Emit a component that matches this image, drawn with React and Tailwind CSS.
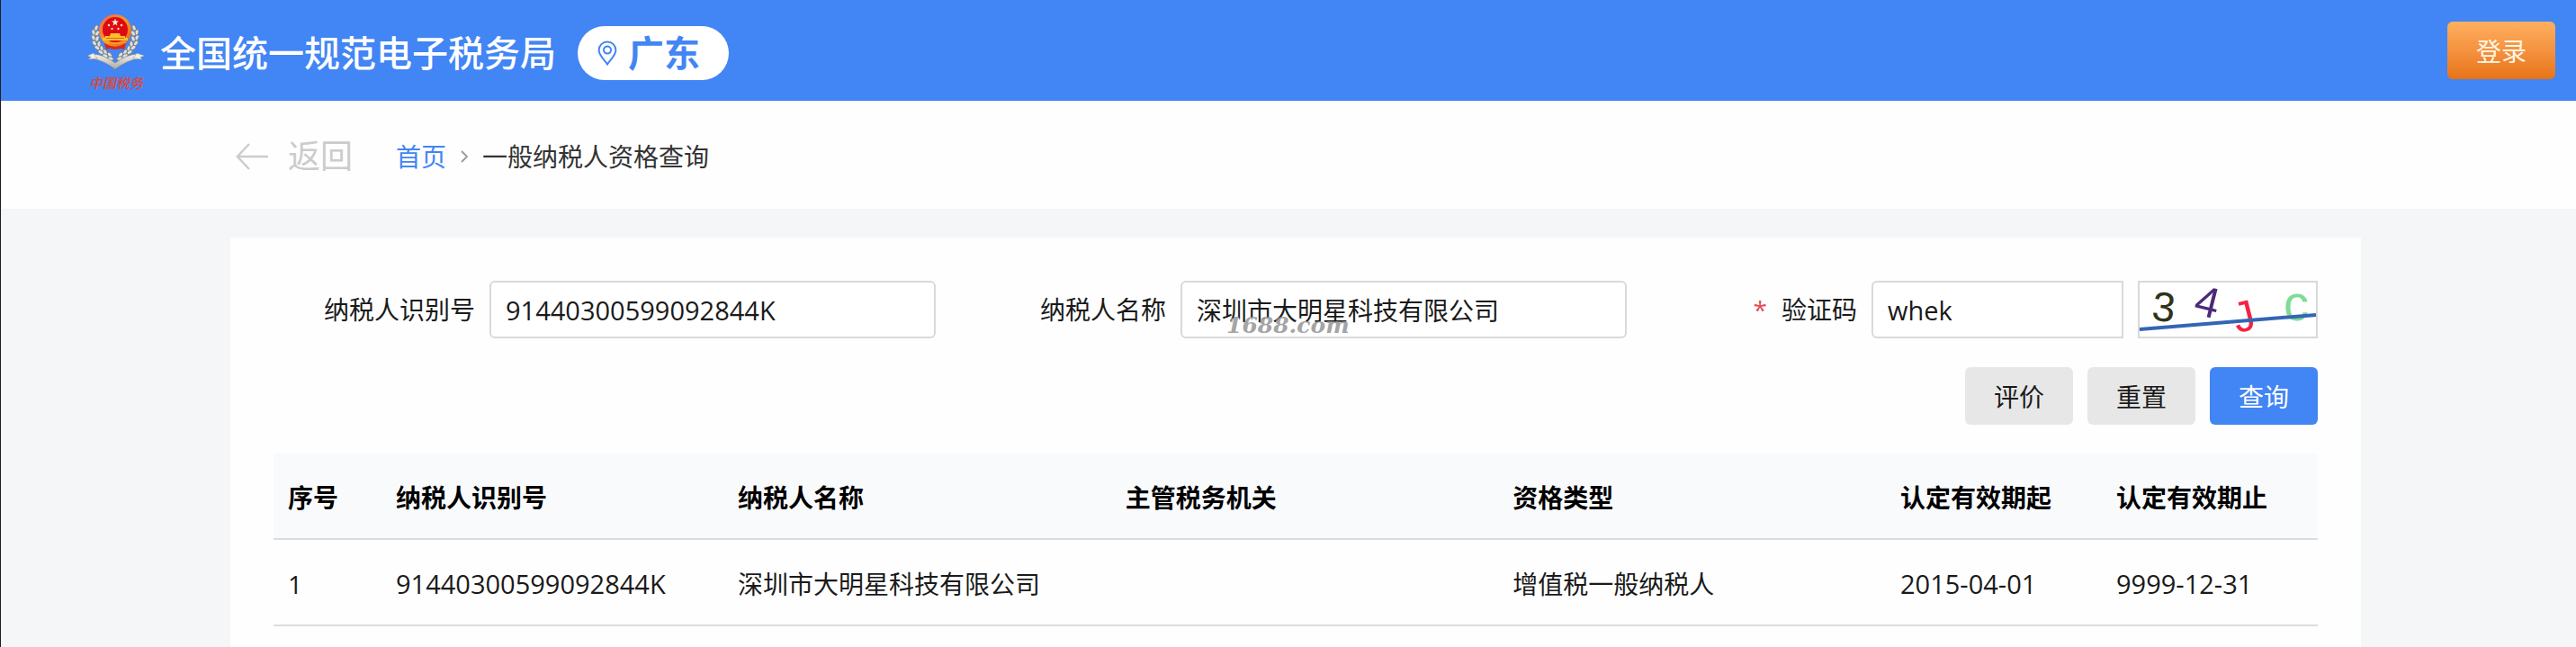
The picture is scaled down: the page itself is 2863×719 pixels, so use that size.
import React, { useState } from 'react'

const columns = [
    { key: "index", title: "序号", width: "w-[120px]" },
    { key: "taxId", title: "纳税人识别号", width: "w-[380px]", latin: true },
    { key: "name", title: "纳税人名称", width: "" },
    { key: "office", title: "主管税务机关", width: "" },
    { key: "type", title: "资格类型", width: "" },
    { key: "from", title: "认定有效期起", width: "w-[240px]", latin: true },
    { key: "to", title: "认定有效期止", width: "w-[240px]", latin: true },
]

const rows = [
    {
        index: "1",
        taxId: "91440300599092844K",
        name: "深圳市大明星科技有限公司",
        office: "",
        type: "增值税一般纳税人",
        from: "2015-04-01",
        to: "9999-12-31"
    },
]

// one side of the wheat wreath: [x, y, angle]
const leaves = [
    [11, 17, 20], [8, 22, -15], [12, 23, 35], [8, 28, -25], [12, 29, 20],
    [9, 34, -40], [14, 35, 5], [12, 39, -50], [17, 40, -10], [16, 44, -60],
    [21, 44, -25], [21, 48, -65], [26, 47, -40], [27, 51, -70],
]

const Wreath = () => (
    <g>
        {leaves.map(([x, y, angle]) => (
            <ellipse key={`${x}-${y}`} cx={x} cy={y} rx="2" ry="3.4" transform={`rotate(${angle} ${x} ${y})`} fill="#dfe0dc" stroke="#6f7780" strokeWidth="0.8" />
        ))}
    </g>
)

const Emblem = () => (
    <svg viewBox="0 2 66 66" className='w-[66px] h-[66px]' aria-hidden="true">
        <defs>
            <linearGradient id="rim" x1="0" y1="0" x2="1" y2="1">
                <stop offset="0" stopColor="#f0605a" />
                <stop offset="0.5" stopColor="#f59a23" />
                <stop offset="1" stopColor="#e8591a" />
            </linearGradient>
            <linearGradient id="ribbon" x1="0" y1="0" x2="0" y2="1">
                <stop offset="0" stopColor="#f4f3ef" />
                <stop offset="1" stopColor="#a9a7a2" />
            </linearGradient>
        </defs>
        <Wreath />
        <g transform="translate(64 0) scale(-1 1)"><Wreath /></g>
        <path d="M20 34 L44 34 L42 41 Q32 37 22 41 Z" fill="#d8281c" />
        <circle cx="32" cy="20" r="18" fill="url(#rim)" />
        <circle cx="32" cy="19" r="14" fill="#dd0a14" />
        <path d="M32 6.6 L33 9.6 L36 9.6 L33.6 11.5 L34.5 14.5 L32 12.7 L29.5 14.5 L30.4 11.5 L28 9.6 L31 9.6 Z" fill="#fff4cf" />
        <circle cx="25" cy="14" r="1.3" fill="#ffd9a0" />
        <circle cx="39" cy="14" r="1.3" fill="#ffd9a0" />
        <circle cx="28.5" cy="18" r="1.2" fill="#ffd9a0" />
        <circle cx="35.5" cy="18" r="1.2" fill="#ffd9a0" />
        <path d="M27 23 H37 L38 26 H43 V28 H46 V31 H18 V28 H21 V26 H26 Z" fill="#fbc02d" />
        <path d="M22 28.5 H42" stroke="#e06a10" strokeWidth="1" />
        <path d="M20 32.5 Q32 36 44 32.5" stroke="#f5a623" strokeWidth="1.6" fill="none" />
        <path d="M22 35 Q32 41 42 35 L40 39 Q32 43 24 39 Z" fill="#d8281c" />
        <path d="M8 46 Q20 47 32 56 Q44 47 56 46 L58 51 Q45 53 32 63 Q19 53 6 51 Z" fill="url(#ribbon)" stroke="#85837f" strokeWidth="0.6" />
        <path d="M8 45 L1 48 L5 49.5 L2 52 L12 51 Z" fill="#efeeea" stroke="#8d8b87" strokeWidth="0.5" />
        <path d="M56 45 L65 48 L60 49.5 L62 52 L52 51 Z" fill="#efeeea" stroke="#8d8b87" strokeWidth="0.5" />
    </svg>
)

const Header = () => (
    <header className='flex items-center justify-between h-28 pl-[95px] pr-[23px] bg-[#4285f4]'>
        <div className='flex items-center pt-1.5'>
            <div className='flex flex-col items-center w-[66px]'>
                <Emblem />
                <span className='text-[15px] leading-5 font-medium italic whitespace-nowrap text-[#e2452f]'>中国税务</span>
            </div>
            <h1 className='ml-4 text-[40px] leading-[60px] font-medium whitespace-nowrap text-white'>全国统一规范电子税务局</h1>
            <button type="button" className='flex items-center gap-3 h-[60px] ml-6 pl-[22px] pr-8 rounded-full bg-white text-[#4285f4]'>
                <svg viewBox="0 0 22 28" className='w-[22px] h-7' fill="none" stroke="currentColor" strokeWidth="2" aria-hidden="true">
                    <path d="M11 26.4 C8 21.8 1.6 16.5 1.6 10.8 A9.4 9.4 0 0 1 20.4 10.8 C20.4 16.5 14 21.8 11 26.4 Z" />
                    <circle cx="11" cy="10.6" r="4" />
                </svg>
                <span className='text-[40px] leading-[60px] font-bold'>广东</span>
            </button>
        </div>
        <button type="button" className='w-[120px] h-16 pt-0.5 rounded-md bg-linear-to-b from-[#ffb05f] to-[#e87312] text-[28px] text-[#fff6e6]'>登录</button>
    </header>
)

const Breadcrumb = () => (
    <nav className='flex items-center h-[120px] pt-1 pl-[261px] bg-[#fefefe] text-[28px] leading-10'>
        <button type="button" className='flex items-center gap-[22px] text-4xl text-[#cccccc]'>
            <svg viewBox="0 0 36 32" className='w-9 h-8' fill="none" stroke="currentColor" strokeWidth="2.4" aria-hidden="true">
                <path d="M15 2 L1.8 16 L15 30 M2 16 H36" />
            </svg>
            返回
        </button>
        <a href="#" className='ml-12 text-[#4285f4]'>首页</a>
        <svg viewBox="0 0 8 14" className='w-2 h-[14px] mx-4' fill="none" stroke="#999999" strokeWidth="1.8" aria-hidden="true">
            <path d="M1 1 L7 7 L1 13" />
        </svg>
        <span className='text-[#333333]'>一般纳税人资格查询</span>
    </nav>
)

const Captcha = () => (
    <svg viewBox="0 0 196 60" className='w-[200px] h-16 shrink-0 overflow-visible border-2 border-[#d9d9d9] bg-white' role="img" aria-label="验证码图片">
        <g fontFamily="'Liberation Sans', sans-serif" strokeWidth="1">
            <text x="14" y="43" fontSize="46" fill="#2e3317" transform="rotate(6 28 28)">3</text>
            <text x="62" y="38" fontSize="48" fill="#4b2a78" transform="rotate(14 76 22)">4</text>
            <text x="104" y="54" fontSize="48" fill="#f5223f" transform="rotate(-14 116 38)">J</text>
            <text x="160" y="42" fontSize="56" fill="#7fdc97">c</text>
        </g>
        <path d="M0 52 L196 36" stroke="#3465b5" strokeWidth="4" />
    </svg>
)

const inputStyle = 'flex-1 min-w-0 h-16 px-4 border-2 border-[#d9d9d9] bg-white text-[#1a1a1a] outline-none'
const labelStyle = 'w-[240px] shrink-0 pr-4 text-right whitespace-nowrap'

const QueryForm = () => {
    const [taxId, setTaxId] = useState("91440300599092844K")
    const [name, setName] = useState("深圳市大明星科技有限公司")
    const [code, setCode] = useState("whek")

    return (
        <form onSubmit={(e) => e.preventDefault()} className='text-[28px] text-[#1a1a1a]'>
            <div className='grid grid-cols-3 gap-8'>
                <div className='flex items-center'>
                    <label htmlFor="taxId" className={labelStyle}>纳税人识别号</label>
                    <input id="taxId" value={taxId} onChange={(e) => setTaxId(e.target.value)} className={`${inputStyle} rounded-md text-[29px]`} />
                </div>
                <div className='relative flex items-center'>
                    <label htmlFor="name" className={labelStyle}>纳税人名称</label>
                    <input id="name" value={name} onChange={(e) => setName(e.target.value)} className={`${inputStyle} rounded-md`} />
                    <span className="absolute left-[291px] top-9 pointer-events-none font-['DejaVu_Serif',serif] text-[25px] leading-7 font-bold italic text-[#8c8c8ccc] [text-shadow:1px_1px_1px_#ffffff]">1688.com</span>
                </div>
                <div className='flex items-center'>
                    <label htmlFor="code" className={labelStyle}>
                        <span className='mr-4 text-[#e34d59]'>*</span>验证码
                    </label>
                    <input id="code" value={code} onChange={(e) => setCode(e.target.value)} className={`${inputStyle} rounded-l-md mr-4 text-[29px]`} />
                    <Captcha />
                </div>
            </div>
            <div className='flex justify-end gap-4 mt-8'>
                <button type="button" className='w-[120px] h-16 pt-0.5 rounded-md bg-[#e7e7e7]'>评价</button>
                <button type="reset" className='w-[120px] h-16 pt-0.5 rounded-md bg-[#e7e7e7]'>重置</button>
                <button type="submit" className='w-[120px] h-16 pt-0.5 rounded-md bg-[#4285f4] text-white'>查询</button>
            </div>
        </form>
    )
}

const ResultTable = () => (
    <table className='w-full mt-8 table-fixed border-separate border-spacing-0 text-left text-[28px] leading-10 text-[#1a1a1a]'>
        <thead>
            <tr className='bg-[#f9fafc] text-black'>
                {columns.map((col) => (
                    <th key={col.key} scope="col" className={`${col.width} h-24 px-4 pt-1 border-b-2 border-[#dcdcdc] font-bold whitespace-nowrap`}>{col.title}</th>
                ))}
            </tr>
        </thead>
        <tbody>
            {rows.map((row) => (
                <tr key={row.index}>
                    {columns.map((col) => (
                        <td key={col.key} className={`h-24 px-4 pt-1 border-b-2 border-[#dcdcdc] whitespace-nowrap ${col.latin ? "text-[29px]" : ""}`}>{row[col.key]}</td>
                    ))}
                </tr>
            ))}
        </tbody>
    </table>
)

const App = () => {
  return (
    <div className="flex flex-col min-h-screen border-l border-[#1c1c1c] bg-[#f5f6f8] font-['Open_Sans','Noto_Sans_CJK_SC',sans-serif]">
        <Header />
        <Breadcrumb />
        <main className='flex flex-col flex-1 pt-8 pl-[255px] pr-[239px]'>
            <section className='flex-1 px-12 pt-12 bg-[#fefefe]'>
                <QueryForm />
                <ResultTable />
            </section>
        </main>
    </div>
  )
}

export default App
